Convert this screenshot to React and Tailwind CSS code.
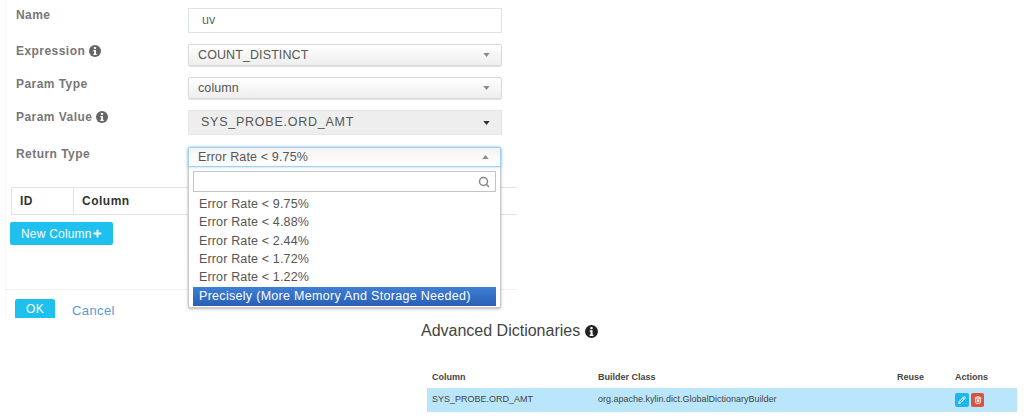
import React from 'react';
import { Search, Plus, Pencil, Trash2 } from 'lucide-react';

const errorRates = ['9.75', '4.88', '2.44', '1.72', '1.22'];

const InfoIcon = ({ className }) => (
  <svg viewBox="0 0 16 16" className={className}>
    <circle cx="8" cy="8" r="8" fill="currentColor" />
    <rect x="6.6" y="2.6" width="2.8" height="2.6" rx="0.6" fill="#fff" />
    <path d="M5.8 6.6h3.5v5.2h1v1.6H5.8v-1.6h1V8.2h-1z" fill="#fff" />
  </svg>
);

const Caret = ({ up, className = 'text-[#8a8a8a]' }) => (
  <svg viewBox="0 0 8 5" className={`w-[7px] h-[4px] ${className}`}>
    <path d={up ? 'M4 0l4 5H0z' : 'M0 0h8L4 5z'} fill="currentColor" />
  </svg>
);

const Label = ({ children }) => (
  <div className="w-[172px] shrink-0 flex items-center gap-[4px] text-[12px] leading-[14px] font-bold text-[#777] tracking-[0.45px]">
    {children}
  </div>
);

const SelectBox = ({ value }) => (
  <div className="w-[314px] h-[22px] flex items-center justify-between pl-[9px] pr-[11px] rounded-[2px] border border-[#d9d9d9] bg-gradient-to-b from-[#ffffff] to-[#eeeeee] shadow-[0_1px_1px_rgba(0,0,0,0.12)] text-[12.5px] text-[#555] tracking-[0.1px]">
    <span>{value}</span>
    <Caret />
  </div>
);

const App = () => {
  return (
    <div className="relative w-[1024px] h-[418px] overflow-hidden bg-white font-['Liberation_Sans',Arial,sans-serif] text-[#444]">
      <div className="h-[318px] w-[512px] ml-[5px] border-l border-[#f7f7f7]">
        {/* Form rows */}
        <div className="pl-[10px] pt-[8px]">
          <div className="flex items-start h-[36px]">
            <Label>Name</Label>
            <div className="w-[314px] h-[25px] flex items-center pl-[13px] border border-[#dde1ea] text-[12.5px] text-[#666]">uv</div>
          </div>
          <div className="flex items-start h-[33px]">
            <Label>Expression <InfoIcon className="w-[12px] h-[12px] text-[#666]" /></Label>
            <SelectBox value="COUNT_DISTINCT" />
          </div>
          <div className="flex items-start h-[33px]">
            <Label>Param Type</Label>
            <SelectBox value="column" />
          </div>
          <div className="flex items-start h-[37px]">
            <Label>Param Value <InfoIcon className="w-[12px] h-[12px] text-[#666]" /></Label>
            <div className="w-[314px] h-[25px] flex items-center justify-between pl-[12px] pr-[11px] bg-[#eeeeee] border border-[#e6e6e6] text-[12.5px] tracking-[0.75px] text-[#555]">
              <span>SYS_PROBE.ORD_AMT</span>
              <Caret className="text-[#333]" />
            </div>
          </div>
          <div className="flex items-start h-[40px]">
            <Label>Return Type</Label>
          </div>
        </div>

        {/* Measures table */}
        <div className="ml-[5px] h-[28px] flex border-y border-l border-[#e4e4e4] text-[12px] font-bold text-[#333] tracking-[0.5px]">
          <div className="w-[62px] flex items-center pl-[8px] border-r border-[#e4e4e4]">ID</div>
          <div className="flex items-center pl-[8px]">Column</div>
        </div>
        <div className="ml-[4px] mt-[7px] w-[103px] h-[23px] flex items-center pl-[11px] rounded-[2px] bg-[#1fc0ee] text-[12px] text-white tracking-[0.2px]">
          New Column<Plus size={11} strokeWidth={4} />
        </div>

        {/* Footer */}
        <div className="mt-[44px] pt-[9px] pl-[9px] border-t border-[#f0f0f0] flex items-start">
          <div className="w-[40px] h-[19px] flex items-center justify-center rounded-t-[2px] bg-[#1fc0ee] text-[12px] text-white tracking-[0.3px]">OK</div>
          <div className="ml-[17px] mt-[2px] text-[13px] text-[#5b9bd5] tracking-[0.4px]">Cancel</div>
        </div>
      </div>

      {/* Open dropdown */}
      <div className="absolute left-[188px] top-[147px] w-[313px] h-[161px] rounded-[2px] bg-white border border-[#c9c9c9] shadow-[0_1px_3px_rgba(0,0,0,0.3)]">
        <div className="h-[20px] flex items-center justify-between pl-[9px] pr-[11px] text-[12.5px] text-[#555] tracking-[0.15px] bg-gradient-to-b from-[#f4f4f4] to-[#ffffff] border border-[#9fd0f5] -m-px mb-0 shadow-[0_0_3px_rgba(90,170,240,0.6)] rounded-t-[2px]">
          <span>Error Rate &lt; 9.75%</span>
          <Caret up />
        </div>
        <div className="mx-[4px] mt-[4px] h-[21px] flex items-center justify-end pr-[5px] border border-[#c4c4c4]">
          <Search size={12} strokeWidth={3} className="text-[#888]" />
        </div>
        <ul className="mx-[4px] mt-[3px] text-[12.5px] text-[#555] tracking-[0.15px]">
          {errorRates.map((rate) => (
            <li key={rate} className="h-[18.4px] flex items-center pl-[6px]">Error Rate &lt; {rate}%</li>
          ))}
          <li className="h-[19px] flex items-center pl-[6px] text-white tracking-[0.3px] bg-gradient-to-b from-[#3f7fd6] to-[#2a5fb4]">
            Precisely (More Memory And Storage Needed)
          </li>
        </ul>
      </div>

      {/* Advanced dictionaries */}
      <div className="absolute left-[421px] top-[321px] w-[597px]">
        <div className="flex items-center gap-[5px] text-[16px] text-[#444] h-[20px]">
          Advanced Dictionaries <InfoIcon className="w-[13px] h-[13px] text-[#222]" />
        </div>
        <table className="ml-[6px] mt-[27px] w-[590px] table-fixed text-[9px] text-[#444]">
          <thead>
            <tr className="h-[20px] text-left">
              <th className="w-[171px] pl-[5px] font-bold">Column</th>
              <th className="w-[299px] font-bold">Builder Class</th>
              <th className="w-[58px] font-bold">Reuse</th>
              <th className="font-bold">Actions</th>
            </tr>
          </thead>
          <tbody>
            <tr className="h-[24px] bg-[#b9e6fb]">
              <td className="pl-[5px]">SYS_PROBE.ORD_AMT</td>
              <td>org.apache.kylin.dict.GlobalDictionaryBuilder</td>
              <td></td>
              <td>
                <div className="flex gap-[2px]">
                  <span className="w-[14px] h-[14px] rounded-[2px] bg-[#1fb5ea] flex items-center justify-center text-white"><Pencil size={8} strokeWidth={3} /></span>
                  <span className="w-[13px] h-[14px] rounded-[2px] bg-[#e0503f] flex items-center justify-center text-white"><Trash2 size={8} strokeWidth={3} /></span>
                </div>
              </td>
            </tr>
          </tbody>
        </table>
      </div>
    </div>
  );
};

export default App;
